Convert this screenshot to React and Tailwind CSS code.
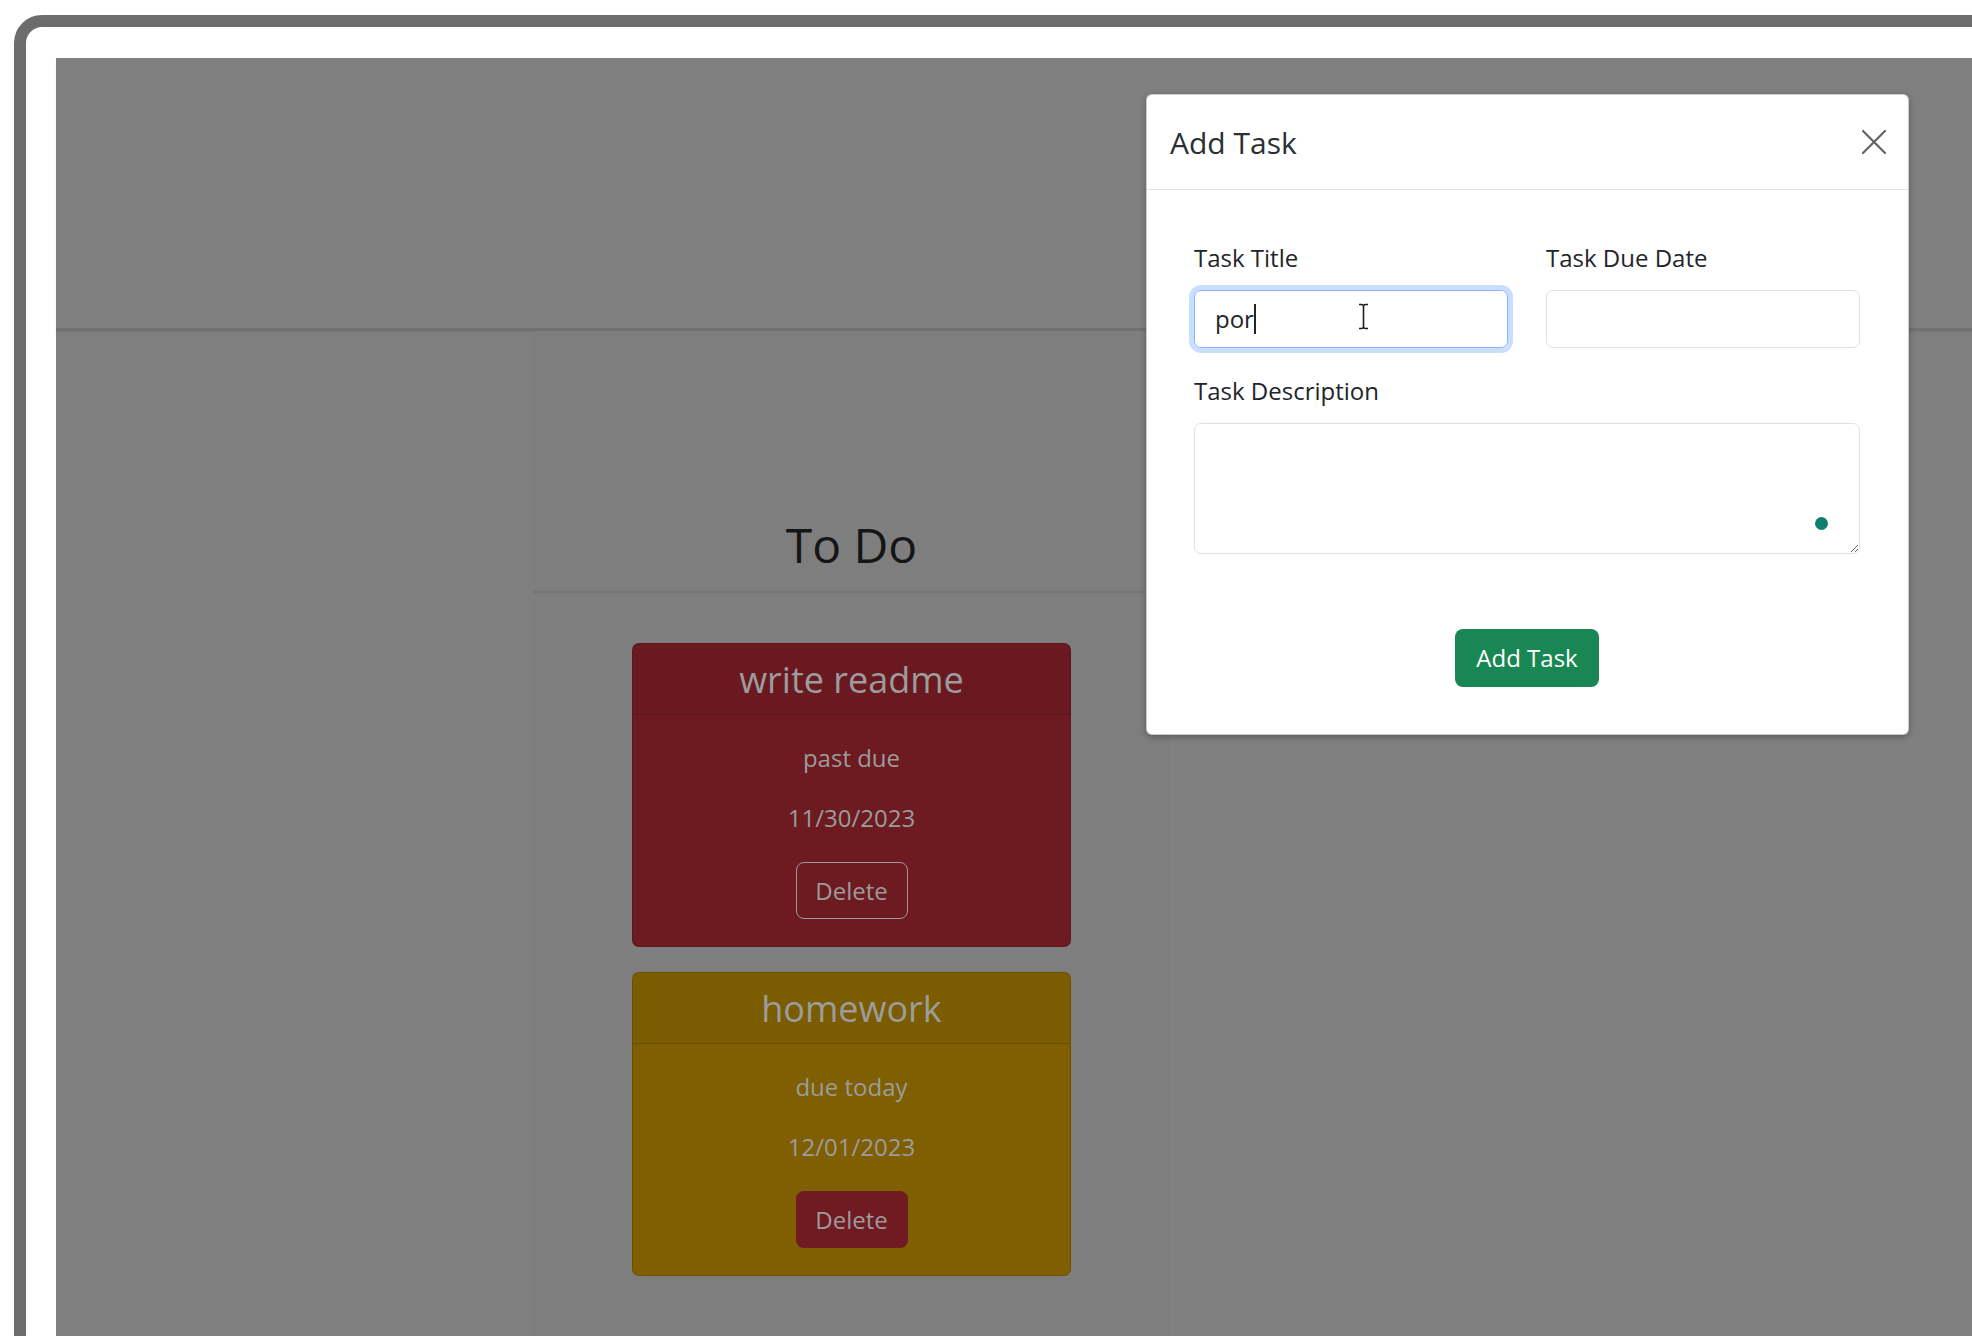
import React from "react"

const font = "font-['Open_Sans',sans-serif]"

const tasks = [
  { title: "write readme", status: "past due", date: "11/30/2023", tone: "bg-[#6d1a21]", outline: true },
  { title: "homework", status: "due today", date: "12/01/2023", tone: "bg-[#7f5f01]", outline: false },
]

function TaskCard({ task }) {
  return (
    <div className={`w-[439px] mx-auto rounded-[7px] border border-black/15 ${task.tone} text-[#9c9c9c]`}>
      <div className="h-[71px] flex items-center justify-center bg-black/[0.03] border-b border-black/15">
        <h4 className="text-[36px] leading-[43px]">{task.title}</h4>
      </div>
      <div className="px-[24px] pt-[25px] pb-[27px] flex flex-col items-center">
        <p className="text-[24px] leading-[36px] mb-[24px]">{task.status}</p>
        <p className="text-[24px] leading-[36px] mb-[26px]">{task.date}</p>
        {task.outline ? (
          <button className="w-[112px] h-[57px] rounded-[8px] border border-[#9a9a9a] text-[24px] leading-[36px]">
            Delete
          </button>
        ) : (
          <button className="w-[112px] h-[57px] rounded-[8px] bg-[#701a21] text-[24px] leading-[36px]">
            Delete
          </button>
        )}
      </div>
    </div>
  )
}

function AddTaskModal() {
  return (
    <div className="absolute left-[1090px] top-[36px] w-[763px] bg-white rounded-[6px] border border-black/20 shadow-[0_2px_6px_rgba(0,0,0,0.3)]">
      <div className="h-[95px] pl-[23px] pr-[21px] flex items-center justify-between border-b border-[#dee2e6]">
        <h5 className="text-[30px] leading-[45px] text-[#2b2f33]">Add Task</h5>
        <button className="w-[26px] h-[26px] flex items-center justify-center" aria-label="Close">
          <svg width="26" height="26" viewBox="0 0 26 26" fill="none">
            <path d="M2 2L24 24M24 2L2 24" stroke="#5e6464" strokeWidth="2.2" strokeLinecap="round" />
          </svg>
        </button>
      </div>

      <div className="pl-[47px] pr-[48px] pt-[50px] pb-[47px]">
        <div className="grid grid-cols-2 gap-x-[38px] mb-[25px]">
          <div>
            <label className="block text-[24px] leading-[36px] text-[#212529] mb-[14px]">Task Title</label>
            <div className="relative h-[58px] rounded-[7px] border border-[#86b7fe] shadow-[0_0_0_5px_rgba(13,110,253,0.22)] pl-[20px] flex items-center text-[24px] leading-[36px] text-[#212529]">
              <span>por</span>
              <span className="inline-block w-[2px] h-[30px] bg-[#212529]"></span>
              <svg className="absolute left-[162px] top-[12px]" width="13" height="27" viewBox="0 0 13 27" fill="none">
                <path d="M2 1.5h2.5c1 0 2 .8 2 2M11 1.5H8.5c-1 0-2 .8-2 2M6.5 3.5v20M2 25.5h2.5c1 0 2-.8 2-2M11 25.5H8.5c-1 0-2-.8-2-2" stroke="#1e1e1e" strokeWidth="1.6" />
              </svg>
            </div>
          </div>
          <div>
            <label className="block text-[24px] leading-[36px] text-[#212529] mb-[14px]">Task Due Date</label>
            <input className="w-full h-[58px] rounded-[7px] border border-[#dee2e6] px-[18px] text-[24px] outline-none" />
          </div>
        </div>

        <label className="block text-[24px] leading-[36px] text-[#212529] mb-[14px]">Task Description</label>
        <div className="relative">
          <textarea className="block w-full h-[131px] rounded-[7px] border border-[#dee2e6] px-[18px] py-[9px] text-[24px] outline-none resize-y"></textarea>
          <span className="absolute right-[32px] top-[94px] w-[13px] h-[13px] rounded-full bg-[#117f6d]"></span>
        </div>

        <div className="flex justify-center mt-[75px]">
          <button className="w-[144px] h-[58px] rounded-[8px] bg-[#198754] text-white text-[24px] leading-[36px]">
            Add Task
          </button>
        </div>
      </div>
    </div>
  )
}

export default function App() {
  return (
    <div className={`w-[1972px] h-[1336px] overflow-hidden bg-white ${font}`}>
      <div className="ml-[14px] mt-[15px] w-[2100px] h-[1500px] border-[12px] border-[#6c6c6c] rounded-tl-[28px] bg-white pl-[30px] pt-[31px]">
        <div className="relative h-full bg-[#808080]">
          <div className="h-[273px] border-b-[3px] border-[#717172] shadow-[0_2px_3px_rgba(0,0,0,0.05)]"></div>

          <div className="ml-[477px] w-[637px] h-full bg-[#7e7e7e]">
            <div className="pt-[185px] pb-[17px] border-b-2 border-[#737373] text-center">
              <h2 className="text-[48px] leading-[58px] text-[#141516]">To Do</h2>
            </div>
            <div className="pt-[50px] flex flex-col gap-[25px]">
              {tasks.map((t) => (
                <TaskCard key={t.title} task={t} />
              ))}
            </div>
          </div>

          <AddTaskModal />
        </div>
      </div>
    </div>
  )
}
